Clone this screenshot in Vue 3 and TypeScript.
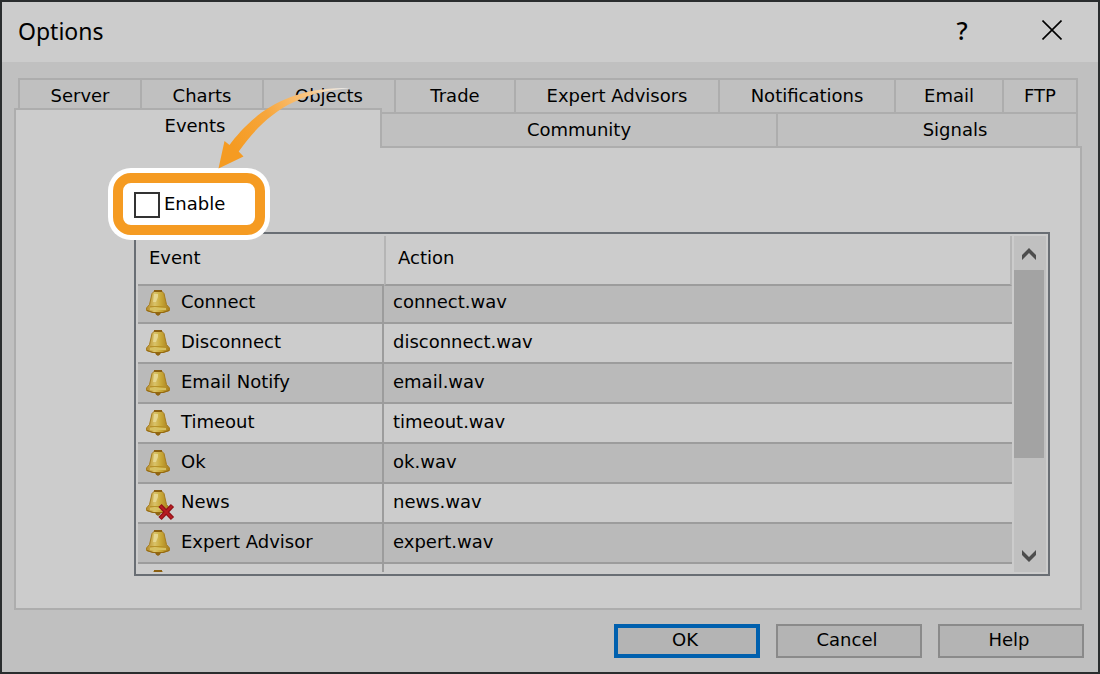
<script setup lang="ts">
import { ref } from 'vue'

interface EventRow {
  name: string
  action: string
  muted?: boolean
}

const enabled = ref(false)
const activeTab = ref('Events')

const backTabs: string[] = ['Server', 'Charts', 'Objects', 'Trade', 'Expert Advisors', 'Notifications', 'Email', 'FTP']
const frontTabs: string[] = ['Events', 'Community', 'Signals']

const rows: EventRow[] = [
  { name: 'Connect', action: 'connect.wav' },
  { name: 'Disconnect', action: 'disconnect.wav' },
  { name: 'Email Notify', action: 'email.wav' },
  { name: 'Timeout', action: 'timeout.wav' },
  { name: 'Ok', action: 'ok.wav' },
  { name: 'News', action: 'news.wav', muted: true },
  { name: 'Expert Advisor', action: 'expert.wav' },
  { name: '', action: '' },
]
</script>

<template>
  <main class="window">
    <header class="titlebar">
      <h1>Options</h1>
      <button type="button" class="title-button help">?</button>
      <button type="button" class="title-button" aria-label="Close">
        <svg width="20" height="20" viewBox="0 0 20 20"><path d="M0.5 0.5L19.5 19.5M19.5 0.5L0.5 19.5" stroke="#000" stroke-width="1.6" fill="none" /></svg>
      </button>
    </header>

    <div class="body">
      <svg class="arrow" width="136" height="84" viewBox="216 86 136 84">
        <defs>
          <linearGradient id="fade" gradientUnits="userSpaceOnUse" x1="236" y1="150" x2="346" y2="86">
            <stop offset="0" stop-color="#f59b22" />
            <stop offset="0.35" stop-color="#f6a63c" />
            <stop offset="0.72" stop-color="#fac684" />
            <stop offset="1" stop-color="#fff" stop-opacity="0.7" />
          </linearGradient>
        </defs>
        <path d="M218.5 168.5L224.5 141L229.5 145C247 122 280 86 350 88.2C294 92 264 116 238.7 151.5L243.5 156.5Z" fill="url(#fade)" />
      </svg>

      <div role="tablist" class="tabs">
        <div class="tab-row back">
          <button v-for="tab in backTabs" :key="tab" type="button" role="tab" class="tab" :aria-selected="activeTab === tab">{{ tab }}</button>
        </div>
        <div class="tab-row front">
          <button v-for="tab in frontTabs" :key="tab" type="button" role="tab" class="tab" :class="{ active: activeTab === tab }" :aria-selected="activeTab === tab">{{ tab }}</button>
        </div>
      </div>

      <section class="panel" role="tabpanel">
        <label class="enable">
          <input v-model="enabled" type="checkbox" />
          <span>Enable</span>
        </label>

        <div class="list">
          <div class="viewport">
            <table>
              <thead>
                <tr>
                  <th class="event" scope="col">Event</th>
                  <th scope="col">Action</th>
                </tr>
              </thead>
              <tbody>
                <tr v-for="(row, i) in rows" :key="i">
                  <td class="event">
                    <div class="name">
                      <svg class="bell" width="24" height="26" viewBox="0 0 24 26">
                        <defs>
                          <linearGradient id="gold" x1="0" y1="0" x2="1" y2="0">
                            <stop offset="0" stop-color="#b58a26" />
                            <stop offset="0.36" stop-color="#d9c36a" />
                            <stop offset="0.62" stop-color="#c9a938" />
                            <stop offset="1" stop-color="#a67c1c" />
                          </linearGradient>
                        </defs>
                        <path d="M8 21H16L14 24.5L12 26L10 24.5Z" fill="#8f6412" />
                        <path d="M8.5 1H15.5L18 3.5L19 8L20.5 14.5L23.5 18V20.5L17 22.5H7L0.5 20.5V18L3.5 14.5L5 8L6 3.5Z" fill="url(#gold)" stroke="#a67d20" stroke-width="1" />
                        <path d="M8 1H16" stroke="#8b6012" stroke-width="2" />
                        <path d="M8 4H12V7L10 12H7Z" fill="#eadc9c" opacity="0.8" />
                        <path d="M4 16.5H20" stroke="#b79228" stroke-width="1" />
                        <path d="M4 19H20" stroke="#d6c162" stroke-width="2" />
                        <path d="M1 20.5L7 22.5H17L23 20.5" stroke="#94680f" stroke-width="1" fill="none" />
                        <g v-if="row.muted">
                          <path d="M14 15.5L26.5 28.5M26.5 15.5L14 28.5" stroke="#8f1218" stroke-width="4.5" />
                          <path d="M14.5 16L26 28M26 16L14.5 28" stroke="#b81c22" stroke-width="2" />
                        </g>
                      </svg>
                      <span>{{ row.name }}</span>
                    </div>
                  </td>
                  <td>{{ row.action }}</td>
                </tr>
              </tbody>
            </table>
          </div>
          <div class="scrollbar">
            <button type="button" class="step" aria-label="Scroll up">
              <svg width="14" height="12" viewBox="0 0 14 12"><path d="M7 0L14 7V12L7 5L0 12V7Z" fill="#4d4d4d" /></svg>
            </button>
            <div class="track"><div class="thumb"></div></div>
            <button type="button" class="step" aria-label="Scroll down">
              <svg width="14" height="12" viewBox="0 0 14 12"><path d="M7 12L14 5V0L7 7L0 0V5Z" fill="#4d4d4d" /></svg>
            </button>
          </div>
        </div>
      </section>
    </div>

    <footer class="actions">
      <button type="button" class="action primary">OK</button>
      <button type="button" class="action">Cancel</button>
      <button type="button" class="action">Help</button>
    </footer>
  </main>
</template>

<style>
body {
  margin: 0;
}
</style>

<style scoped>
* {
  box-sizing: border-box;
}

.window {
  min-height: 100vh;
  display: flex;
  flex-direction: column;
  border: 2px solid #2a2d2e;
  background: #c0c0c0;
  color: #000;
  font: 18px/20px "DejaVu Sans", sans-serif;
}

button {
  font: inherit;
  color: inherit;
  border: 0;
  margin: 0;
  padding: 0;
  background: none;
}

svg {
  display: block;
}

.titlebar {
  display: flex;
  align-items: center;
  height: 60px;
  padding: 0 16px 4px;
  background: #ccc;
}

h1 {
  flex: 1;
  margin: 0;
  padding-top: 2px;
  font: 400 23px/32px "Noto Sans", sans-serif;
}

.title-button {
  display: flex;
  align-items: center;
  justify-content: center;
  width: 60px;
  height: 40px;
}

.title-button.help {
  margin-right: 30px;
  font: 500 25px/32px "Noto Sans", sans-serif;
}

.body {
  position: relative;
  flex: 1;
  display: flex;
  flex-direction: column;
  padding: 16px 16px 0 12px;
}

.arrow {
  position: absolute;
  left: 214px;
  top: 24px;
  z-index: 4;
  pointer-events: none;
}

.tab-row {
  display: grid;
}

.back {
  grid-template-columns: 122fr 122fr 132fr 120fr 204fr 176fr 108fr 74fr;
  margin: 0 4px;
  border-left: 2px solid #adadad;
}

.front {
  grid-template-columns: 368fr 396fr 300fr;
  margin-right: 4px;
}

.tab {
  height: 34px;
  padding: 6px 0;
  border-right: 2px solid #adadad;
  line-height: 20px;
}

.back .tab {
  height: 36px;
  border-top: 2px solid #adadad;
  border-bottom: 2px solid #adadad;
}

.front .tab {
  height: 32px;
}

.front .tab:last-child {
  padding-left: 56px;
}

.front .tab.active {
  position: relative;
  z-index: 1;
  height: 40px;
  margin: -6px 0 -2px;
  padding: 6px 6px 12px 0;
  border: 2px solid #adadad;
  border-bottom: 0;
  background: #ccc;
}

.panel {
  flex: 1;
  padding: 20px 30px 32px 118px;
  border: 2px solid #adadad;
  background: #ccc;
}

.enable {
  position: relative;
  z-index: 2;
  display: flex;
  align-items: center;
  gap: 4px;
  width: 152px;
  height: 62px;
  margin: 5px 0 -3px -21px;
  padding-left: 11px;
  border: 10px solid #f59b22;
  border-radius: 18px;
  background: #fff;
  box-shadow: 0 0 0 5px #fff;
}

.enable input {
  appearance: none;
  width: 26px;
  height: 26px;
  margin: 2px 0 0;
  border: 2px solid #333;
  background: #fff;
}

.enable input:checked {
  background: #333;
}

.list {
  display: flex;
  gap: 2px;
  height: 344px;
  padding: 2px;
  border: 2px solid #696e74;
}

.viewport {
  flex: 1;
  overflow: hidden;
}

table {
  width: 100%;
  table-layout: fixed;
  border-collapse: separate;
  border-spacing: 0;
}

th {
  height: 50px;
  padding: 0 0 4px 11px;
  border-bottom: 2px solid #9c9c9c;
  font-weight: 400;
  text-align: left;
}

th + th {
  padding-left: 12px;
  border-left: 2px solid #b5b5b5;
  border-right: 2px solid #b5b5b5;
}

.event {
  width: 246px;
}

td {
  height: 40px;
  padding: 0 0 2px 9px;
  border-bottom: 2px solid #9c9c9c;
}

td.event {
  padding-left: 8px;
  border-right: 2px solid #9c9c9c;
}

tbody tr:first-child td {
  height: 38px;
  padding-bottom: 4px;
}

tbody tr:nth-child(odd) {
  background: #bababa;
}

.name {
  display: flex;
  align-items: center;
  gap: 11px;
  height: 20px;
}

.bell {
  position: relative;
  top: 1px;
  overflow: visible;
}

.scrollbar {
  display: flex;
  flex-direction: column;
  width: 32px;
  background: #c0c0c0;
}

.step {
  display: flex;
  align-items: center;
  justify-content: center;
  width: 30px;
  height: 34px;
  padding-top: 2px;
}

.track {
  flex: 1;
}

.thumb {
  width: 30px;
  height: 70%;
  background: #a3a3a3;
}

.actions {
  display: flex;
  justify-content: flex-end;
  gap: 16px;
  padding: 14px;
}

.action {
  width: 146px;
  height: 34px;
  padding: 0 4px 2px 0;
  border: 2px solid #8a8a8a;
  background: #b4b4b4;
}

.action.primary {
  border: 4px solid #0060ae;
}
</style>
